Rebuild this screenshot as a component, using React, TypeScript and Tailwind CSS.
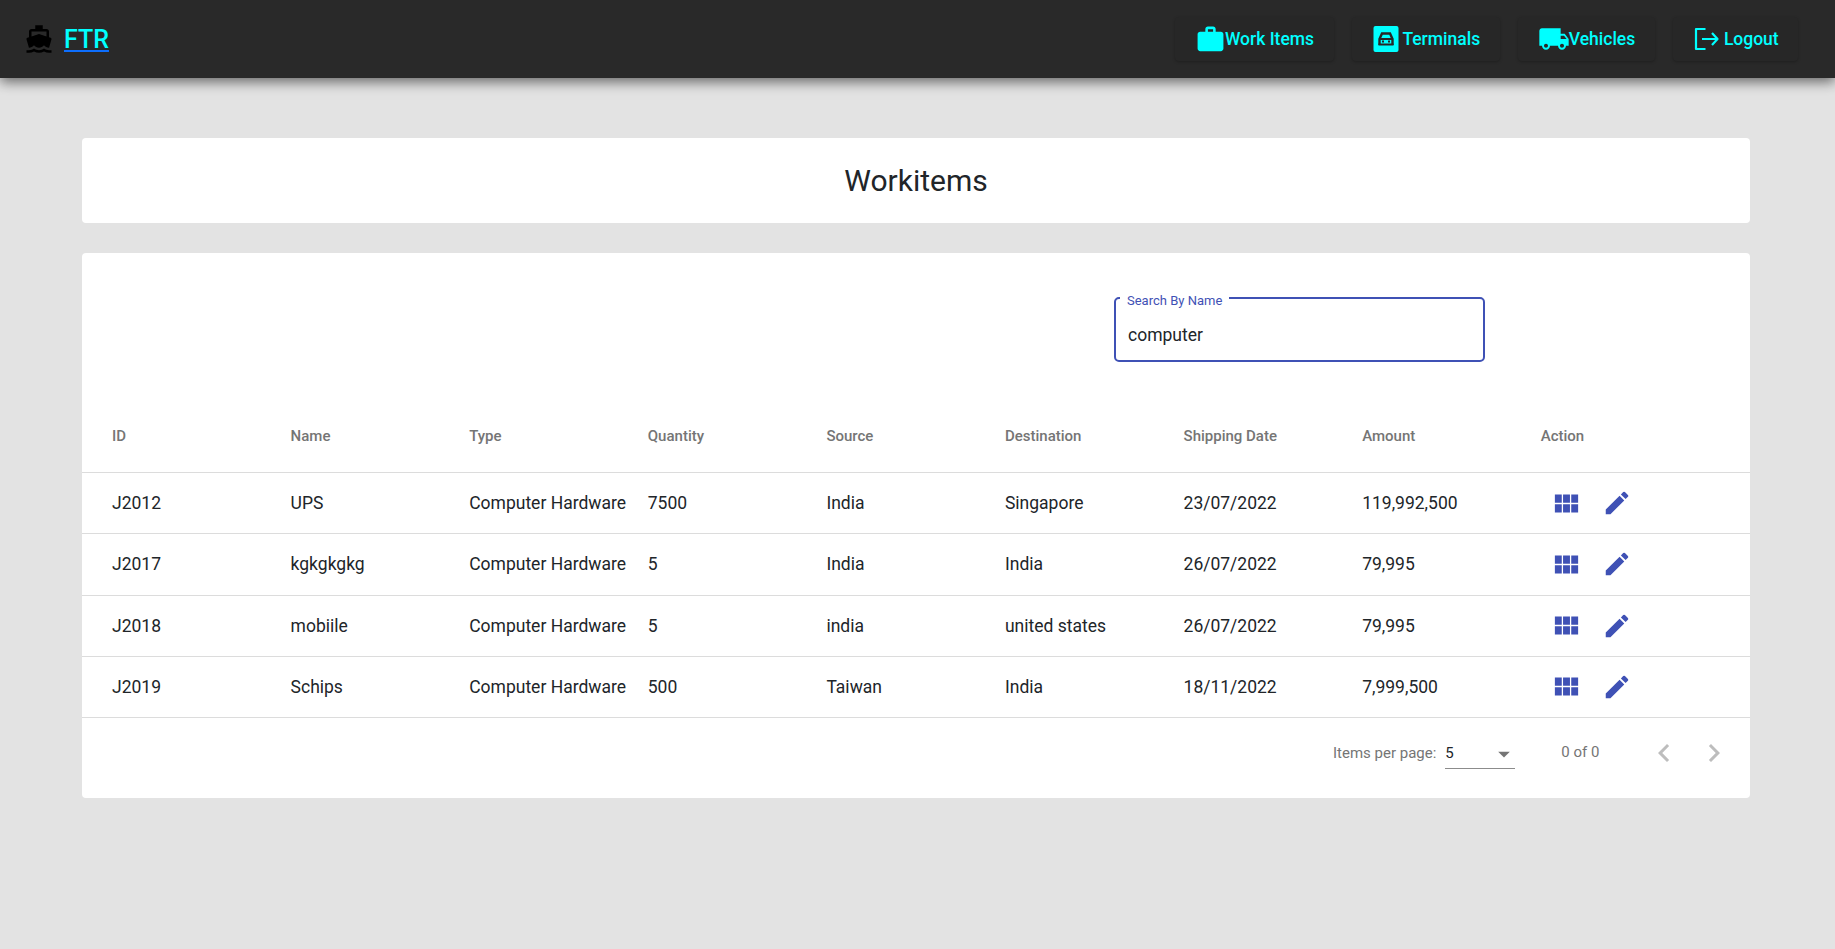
import { MdArrowDropDown, MdChevronLeft, MdChevronRight, MdDirectionsBoat, MdEdit, MdLocalShipping, MdViewModule, MdWork } from "react-icons/md";
import type { ReactNode } from "react";

const rows = [
  { id: "J2012", name: "UPS", type: "Computer Hardware", qty: "7500", source: "India", dest: "Singapore", date: "23/07/2022", amount: "119,992,500" },
  { id: "J2017", name: "kgkgkgkg", type: "Computer Hardware", qty: "5", source: "India", dest: "India", date: "26/07/2022", amount: "79,995" },
  { id: "J2018", name: "mobiile", type: "Computer Hardware", qty: "5", source: "india", dest: "united states", date: "26/07/2022", amount: "79,995" },
  { id: "J2019", name: "Schips", type: "Computer Hardware", qty: "500", source: "Taiwan", dest: "India", date: "18/11/2022", amount: "7,999,500" },
];

const heads = ["ID", "Name", "Type", "Quantity", "Source", "Destination", "Shipping Date", "Amount", "Action"];

function TerminalIcon() {
  return (
    <svg width="26" height="26" viewBox="0 0 26 26" className="ml-[1px] shrink-0">
      <rect x="0.5" y="0" width="25" height="26" rx="2" fill="#00ffff" />
      <path d="M6.5 19v-6l2.5-5.5h8l2.5 5.5v6" fill="none" stroke="#272727" strokeWidth="2.4" />
      <path d="M6 13h14M5.5 18.5h15" stroke="#272727" strokeWidth="2" />
      <rect x="9" y="14.5" width="2" height="2" fill="#272727" />
      <rect x="15" y="14.5" width="2" height="2" fill="#272727" />
    </svg>
  );
}

function LogoutIcon() {
  return (
    <svg width="26" height="24" viewBox="0 0 26 24" fill="none" stroke="#00ffff" strokeWidth="2.2" strokeLinejoin="round" className="ml-[2px] shrink-0">
      <path d="M11.5 2H2v20h9.5" />
      <path d="M8 12h15.5M18 6l5.5 6-5.5 6" />
    </svg>
  );
}

function NavButton({ icon, label, width }: { icon: ReactNode; label: string; width: string }) {
  return (
    <button className={`${width} flex h-11 items-center justify-center rounded-[4px] bg-[#272727] text-[17.5px] font-medium text-[#00ffff] shadow-[0_1px_3px_rgba(0,0,0,0.25)]`}>
      {icon}
      <span>{label}</span>
    </button>
  );
}

export default function App() {
  return (
    <div className="min-h-[949px] bg-[#e3e3e3] font-['Roboto',sans-serif] text-[#212529]">
      <header className="flex h-[78px] items-center justify-between bg-[#292929] pr-[37px] pl-[24px] shadow-[0_4px_12px_rgba(0,0,0,0.55)]">
        <div className="flex items-center gap-[10px]">
          <MdDirectionsBoat size={30} color="#000000" />
          <a href="#" className="text-[25px] leading-none font-medium text-[#00ffff] underline decoration-[#0d6efd] decoration-2 underline-offset-2">
            FTR
          </a>
        </div>
        <nav className="flex gap-[18px]">
          <NavButton width="w-[159px]" icon={<MdWork size={31} className="mr-[-1px] shrink-0" />} label="Work Items" />
          <NavButton width="w-[148px]" icon={<TerminalIcon />} label={"\u2009Terminals"} />
          <NavButton width="w-[137px]" icon={<MdLocalShipping size={32} className="mr-[-1px] shrink-0" />} label="Vehicles" />
          <NavButton width="w-[125px]" icon={<LogoutIcon />} label={"\u2009Logout"} />
        </nav>
      </header>

      <main className="flex flex-col gap-[30px] pt-[60px] pr-[85px] pl-[82px]">
        <section className="flex h-[85px] items-center justify-center rounded-[4px] bg-white">
          <h1 className="text-[30px] leading-none font-normal">Workitems</h1>
        </section>

        <section className="rounded-[4px] bg-white pt-11">
          <div className="pl-[1032px]">
            <div className="relative h-[65px] w-[371px] rounded-[5px] border-2 border-[#3f51b5] pt-[23px] pl-[12px] text-[17.5px] leading-[26px]">
              <span className="absolute -top-[6px] left-[4px] bg-white px-[7px] text-[13px] leading-[15px] text-[#3f51b5]">Search By Name</span>
              computer
            </div>
          </div>

          <div className="mt-[38px] grid h-[73px] grid-cols-[repeat(9,178.6px)] items-center border-b border-[#dcdcdc] pl-[30px] text-[15px] font-medium text-[#757575]">
            {heads.map((h) => (
              <div key={h}>{h}</div>
            ))}
          </div>

          {rows.map((r) => (
            <div key={r.id} className="grid h-[61.25px] grid-cols-[repeat(9,178.6px)] items-center border-b border-[#dcdcdc] pl-[30px] text-[17.5px] text-[#212529]">
              <div>{r.id}</div>
              <div>{r.name}</div>
              <div className="whitespace-nowrap">{r.type}</div>
              <div>{r.qty}</div>
              <div>{r.source}</div>
              <div>{r.dest}</div>
              <div>{r.date}</div>
              <div>{r.amount}</div>
              <div className="flex items-center gap-[20px] pl-[10px] text-[#3f51b5]">
                <MdViewModule size={31} />
                <MdEdit size={30} />
              </div>
            </div>
          ))}

          <div className="flex h-[80px] items-start pt-[19px] pl-[1251px] text-[15px] text-[#757575]">
            <span className="mt-[5px]">Items per page:</span>
            <div className="ml-[9px] flex h-[32px] w-[70px] items-start justify-between border-b border-[#8c8c8c] pt-[5px] text-[#212529]">
              <span>5</span>
              <MdArrowDropDown size={28} color="#757575" className="-mt-[2px] -mr-[3px]" />
            </div>
            <span className="mt-[4px] ml-[46px]">0 of 0</span>
            <div className="-mt-[2px] ml-[47px] flex gap-[14px] text-[#bdbdbd]">
              <MdChevronLeft size={36} />
              <MdChevronRight size={36} />
            </div>
          </div>
        </section>
      </main>
    </div>
  );
}
